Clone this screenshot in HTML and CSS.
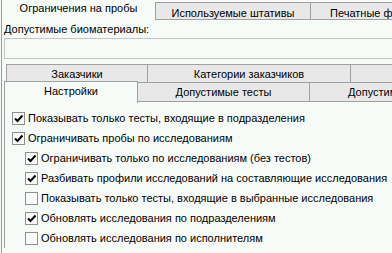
FILE: index.html
```html
<!DOCTYPE html>
<html lang="ru">
<head>
  <meta charset="UTF-8">
  <title>Ограничения на пробы</title>
  <link rel="stylesheet" href="styles.css">
</head>
<body>
  <div class="window">
    <div class="tabs-top">
      <div class="tab active">Ограничения на пробы</div>
      <div class="tab w1">Используемые штативы</div>
      <div class="tab rest">Печатные формы</div>
    </div>

    <div class="label">Допустимые биоматериалы:</div>
    <div class="field"></div>

    <div class="subtabs">
      <div class="row back">
        <div class="stab s1">Заказчики</div>
        <div class="stab s2">Категории заказчиков</div>
        <div class="stab rest"></div>
      </div>
      <div class="row front">
        <div class="stab active">Настройки</div>
        <div class="stab s3">Допустимые тесты</div>
        <div class="stab rest">Допустимые исследования</div>
      </div>
    </div>

    <div class="panel">
      <div class="check"><span class="box on"></span>Показывать только тесты, входящие в подразделения</div>
      <div class="check"><span class="box on"></span>Ограничивать пробы по исследованиям</div>
      <div class="check sub"><span class="box on"></span>Ограничивать только по исследованиям (без тестов)</div>
      <div class="check sub"><span class="box on"></span>Разбивать профили исследований на составляющие исследования</div>
      <div class="check sub"><span class="box"></span>Показывать только тесты, входящие в выбранные исследования</div>
      <div class="check sub"><span class="box on"></span>Обновлять исследования по подразделениям</div>
      <div class="check sub"><span class="box"></span>Обновлять исследования по исполнителям</div>
    </div>
  </div>
</body>
</html>
```

FILE: styles.css
```css
* {
  box-sizing: border-box;
}

body {
  margin: 0;
  background: #f7fbf8;
  font-family: 'Liberation Sans', Arial, sans-serif;
  font-size: 11px;
  color: #000;
  overflow: hidden;
}

.window {
  margin-left: 1px;
  border-left: 1px solid #9c9c9c;
  height: 253px;
  overflow: hidden;
}

/* top tab strip */
.tabs-top {
  display: flex;
  align-items: flex-start;
  height: 20px;
}

.tab {
  white-space: nowrap;
  overflow: hidden;
}

.tab.active {
  width: 153px;
  height: 20px;
  padding-top: 2px;
  text-align: center;
}

.tab.w1, .tab.rest {
  margin-top: 2px;
  height: 18px;
  padding-top: 4px;
  background: #e8e8e8;
  border: 1px solid #a0a0a0;
  border-right: none;
  text-align: center;
}

.tab.w1 {
  width: 155px;
}

.tab.rest {
  flex: 1;
  text-align: left;
  padding-left: 19px;
}

.label {
  margin-top: 2px;
  padding-left: 2px;
  line-height: 14px;
}

.field {
  margin: 2px 0 0 2px;
  height: 21px;
  border: 1px solid #c4c4c4;
  border-right: none;
  background: #f7fbf8;
}

/* inner tab control */
.subtabs {
  margin-top: 5px;
}

.row {
  display: flex;
  align-items: flex-start;
}

.stab {
  white-space: nowrap;
  overflow: hidden;
  text-align: center;
  background: #e8e8e8;
  border-top: 1px solid #a0a0a0;
  border-left: 1px solid #a0a0a0;
}

.back {
  padding-left: 4px;
  height: 18px;
}

.back .stab {
  height: 18px;
  padding-top: 3px;
}

.s1 {
  width: 141px;
}

.s2 {
  width: 203px;
}

.stab.rest {
  flex: 1;
}

.front {
  padding-left: 2px;
  height: 21px;
}

.front .stab {
  height: 20px;
  padding-top: 3px;
  border-bottom: 1px solid #a0a0a0;
}

.front .stab.active {
  width: 134px;
  height: 22px;
  margin-top: -1px;
  padding-top: 3px;
  background: #f7fbf8;
  border-right: 1px solid #a0a0a0;
  border-bottom: none;
}

.front .s3 {
  width: 171px;
  border-left: none;
}

.front .stab.rest {
  text-align: left;
  padding-left: 38px;
}

.panel {
  margin-left: 2px;
  border-left: 1px solid #a0a0a0;
  padding: 5px 0 0 7px;
}

.check {
  display: flex;
  align-items: center;
  height: 20px;
  white-space: nowrap;
}

.check.sub {
  padding-left: 13px;
}

.box {
  width: 13px;
  height: 13px;
  margin-right: 3px;
  border: 1px solid #8e8f8f;
  background: #fbfbfb;
  flex-shrink: 0;
}

.box.on {
  background: #fbfbfb url("data:image/svg+xml;utf8,<svg xmlns='http://www.w3.org/2000/svg' width='11' height='11'><path d='M2 5.5 L4.5 8 L9.5 2.5' fill='none' stroke='black' stroke-width='2'/></svg>") no-repeat center;
}
```
